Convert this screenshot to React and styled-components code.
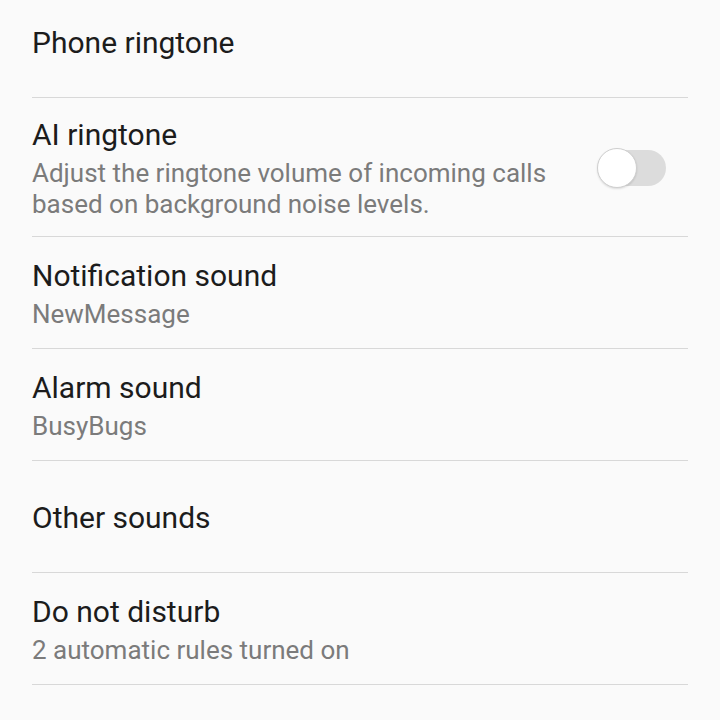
import React from "react";
import styled, { createGlobalStyle } from "styled-components";

const Global = createGlobalStyle`
  html, body { margin: 0; padding: 0; background: #fafafa; }
  body { font-family: Roboto, "Noto Sans", "Liberation Sans", sans-serif; overflow: hidden; }
`;

const Page = styled.div`
  width: 720px;
  height: 720px;
  overflow: hidden;
  background: #fafafa;
`;

const List = styled.div`
  margin-top: -14px;
  padding: 0 32px;
`;

const Row = styled.div`
  display: flex;
  align-items: center;
  min-height: 112px;
  box-sizing: border-box;
  padding: 18.5px 0 16.5px;
  border-bottom: 1px solid #d8d8d8;
`;

const Texts = styled.div`
  flex: 1;
  display: flex;
  flex-direction: column;
`;

const Title = styled.div`
  font-size: 30px;
  line-height: 36px;
  color: #1c1c1c;
`;

const Sub = styled.div`
  margin-top: 5px;
  font-size: 26px;
  line-height: 31px;
  color: #7b7b7b;
`;

const Switch = styled.div`
  position: relative;
  flex: none;
  width: 66px;
  height: 36px;
  margin: 0 22px 0 44px;
  border-radius: 18px;
  background: #dcdcdc;
`;

const Thumb = styled.div`
  position: absolute;
  left: -3px;
  top: -2px;
  width: 40px;
  height: 40px;
  box-sizing: border-box;
  border-radius: 50%;
  background: #ffffff;
  border: 1px solid #cfcfcf;
  box-shadow: 0 1px 2px rgba(0, 0, 0, 0.12);
`;

const items = [
  { title: "Phone ringtone" },
  {
    title: "AI ringtone",
    sub: "Adjust the ringtone volume of incoming calls based on background noise levels.",
    toggle: true,
  },
  { title: "Notification sound", sub: "NewMessage" },
  { title: "Alarm sound", sub: "BusyBugs" },
  { title: "Other sounds" },
  { title: "Do not disturb", sub: "2 automatic rules turned on" },
];

export default function App() {
  return (
    <Page>
      <Global />
      <List>
        {items.map((it) => (
          <Row key={it.title}>
            <Texts>
              <Title>{it.title}</Title>
              {it.sub && <Sub>{it.sub}</Sub>}
            </Texts>
            {it.toggle && (
              <Switch>
                <Thumb />
              </Switch>
            )}
          </Row>
        ))}
      </List>
    </Page>
  );
}
